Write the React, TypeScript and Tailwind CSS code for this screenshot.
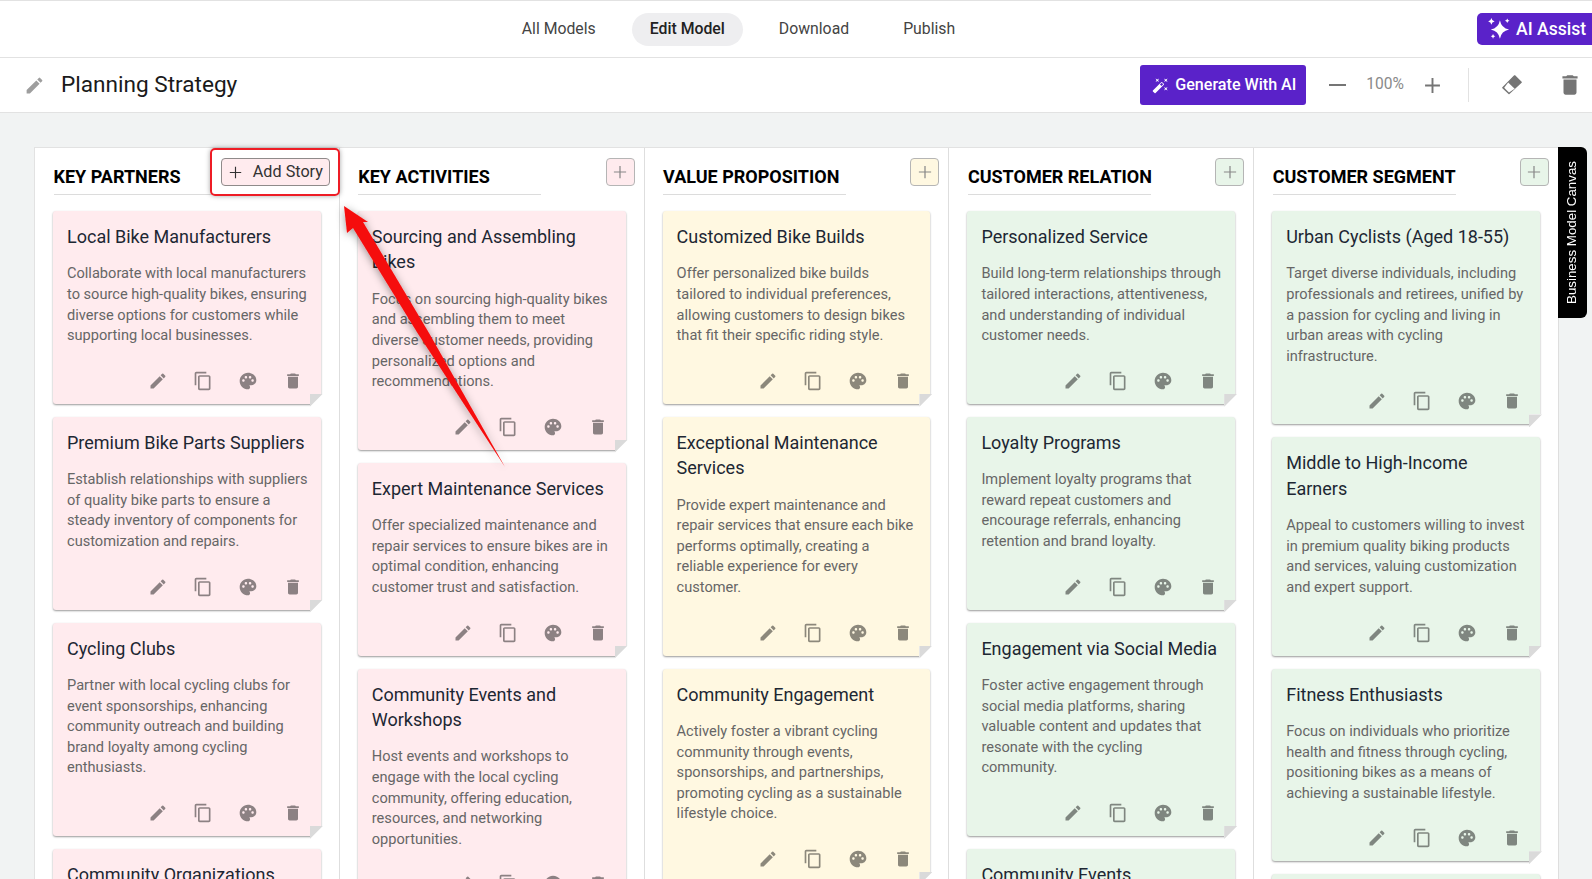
const editPath = 'M3 17.25V21h3.75L17.81 9.94l-3.75-3.75L3 17.25zM20.71 7.04c.39-.39.39-1.02 0-1.41l-2.34-2.34a.9959.9959 0 0 0-1.41 0l-1.83 1.83 3.75 3.75 1.83-1.83z';
const copyPath = 'M16 1H4c-1.1 0-2 .9-2 2v14h2V3h12V1zm3 4H8c-1.1 0-2 .9-2 2v14c0 1.1.9 2 2 2h11c1.1 0 2-.9 2-2V7c0-1.1-.9-2-2-2zm0 16H8V7h11v14z';
const palettePath = 'M12 2C6.49 2 2 6.49 2 12s4.49 10 10 10c1.38 0 2.5-1.12 2.5-2.5 0-.61-.23-1.2-.64-1.67-.08-.1-.13-.21-.13-.33 0-.28.22-.5.5-.5H16c3.31 0 6-2.69 6-6 0-4.96-4.49-9-10-9zm5.5 11c-.83 0-1.5-.67-1.5-1.5s.67-1.5 1.5-1.5 1.5.67 1.5 1.5-.67 1.5-1.5 1.5zm-3-4c-.83 0-1.5-.67-1.5-1.5S13.67 6 14.5 6s1.5.67 1.5 1.5S15.33 9 14.5 9zM5 11.5c0-.83.67-1.5 1.5-1.5s1.5.67 1.5 1.5S7.33 13 6.5 13 5 12.33 5 11.5zm6-4c0 .83-.67 1.5-1.5 1.5S8 8.33 8 7.5 8.67 6 9.5 6s1.5.67 1.5 1.5z';
const deletePath = 'M6 19c0 1.1.9 2 2 2h8c1.1 0 2-.9 2-2V7H6v12zM19 4h-3.5l-1-1h-5l-1 1H5v2h14V4z';
const wandPath = 'M7.5 5.6 10 7 8.6 4.5 10 2 7.5 3.4 5 2l1.4 2.5L5 7zm12 9.8L17 14l1.4 2.5L17 19l2.5-1.4L22 19l-1.4-2.5L22 14zM22 2l-2.5 1.4L17 2l1.4 2.5L17 7l2.5-1.4L22 7l-1.4-2.5zm-7.63 5.29a.9959.9959 0 0 0-1.41 0L1.29 18.96c-.39.39-.39 1.02 0 1.41l2.34 2.34c.39.39 1.02.39 1.41 0L16.7 11.05c.39-.39.39-1.02 0-1.41l-2.33-2.35zm-1.03 5.49-2.12-2.12 2.44-2.44 2.12 2.12-2.44 2.44z';

function Icon({ d, className }: { d: string; className?: string }) {
  return (
    <svg viewBox="0 0 24 24" fill="currentColor" className={className}>
      <path d={d} />
    </svg>
  );
}

function Plus({ className, weight = 1.4 }: { className?: string; weight?: number }) {
  return (
    <svg viewBox="0 0 16 16" fill="none" stroke="currentColor" strokeWidth={weight} className={className}>
      <path d="M8 1v14M1 8h14" />
    </svg>
  );
}

function Sparkles({ className }: { className?: string }) {
  return (
    <svg viewBox="0 0 24 24" fill="currentColor" className={className}>
      <path d="M13 2.5Q14.5 11 23 12.6 14.5 14.2 13 22.7 11.5 14.2 3 12.6 11.5 11 13 2.5z" />
      <path d="M3.7 0Q4.2 3.2 7.2 3.7 4.2 4.2 3.7 7.4 3.2 4.2 0.2 3.7 3.2 3.2 3.7 0z" />
      <path d="M21 .5Q21.4 2.6 23.5 3 21.4 3.4 21 5.5 20.6 3.4 18.5 3 20.6 2.6 21 .5z" />
      <path d="M5.5 17.5Q5.9 19.6 8 20 5.9 20.4 5.5 22.5 5.1 20.4 3 20 5.1 19.6 5.5 17.5z" />
    </svg>
  );
}

function Eraser({ className }: { className?: string }) {
  return (
    <svg viewBox="0 0 24 24" className={className}>
      <path d="M15.2 1 23 8.8 8.4 22.2 1 15.2z" fill="#757575" stroke="#757575" strokeWidth="1.6" strokeLinejoin="round" />
      <path d="M7.4 9 15.2 16.6 8.4 21 2.6 15.2z" fill="#fff" strokeLinejoin="round" />
    </svg>
  );
}

type Tone = 'pink' | 'yellow' | 'green';
type Card = { title: string; body: string };

const columns: { name: string; tone: Tone; cards: Card[] }[] = [
  {
    name: 'KEY PARTNERS',
    tone: 'pink',
    cards: [
      { title: 'Local Bike Manufacturers', body: 'Collaborate with local manufacturers to source high-quality bikes, ensuring diverse options for customers while supporting local businesses.' },
      { title: 'Premium Bike Parts Suppliers', body: 'Establish relationships with suppliers of quality bike parts to ensure a steady inventory of components for customization and repairs.' },
      { title: 'Cycling Clubs', body: 'Partner with local cycling clubs for event sponsorships, enhancing community outreach and building brand loyalty among cycling enthusiasts.' },
      { title: 'Community Organizations', body: '' },
    ],
  },
  {
    name: 'KEY ACTIVITIES',
    tone: 'pink',
    cards: [
      { title: 'Sourcing and Assembling Bikes', body: 'Focus on sourcing high-quality bikes and assembling them to meet diverse customer needs, providing personalized options and recommendations.' },
      { title: 'Expert Maintenance Services', body: 'Offer specialized maintenance and repair services to ensure bikes are in optimal condition, enhancing customer trust and satisfaction.' },
      { title: 'Community Events and Workshops', body: 'Host events and workshops to engage with the local cycling community, offering education, resources, and networking opportunities.' },
    ],
  },
  {
    name: 'VALUE PROPOSITION',
    tone: 'yellow',
    cards: [
      { title: 'Customized Bike Builds', body: 'Offer personalized bike builds tailored to individual preferences, allowing customers to design bikes that fit their specific riding style.' },
      { title: 'Exceptional Maintenance Services', body: 'Provide expert maintenance and repair services that ensure each bike performs optimally, creating a reliable experience for every customer.' },
      { title: 'Community Engagement', body: 'Actively foster a vibrant cycling community through events, sponsorships, and partnerships, promoting cycling as a sustainable lifestyle choice.' },
    ],
  },
  {
    name: 'CUSTOMER RELATION',
    tone: 'green',
    cards: [
      { title: 'Personalized Service', body: 'Build long-term relationships through tailored interactions, attentiveness, and understanding of individual customer needs.' },
      { title: 'Loyalty Programs', body: 'Implement loyalty programs that reward repeat customers and encourage referrals, enhancing retention and brand loyalty.' },
      { title: 'Engagement via Social Media', body: 'Foster active engagement through social media platforms, sharing valuable content and updates that resonate with the cycling\ncommunity.' },
      { title: 'Community Events', body: '' },
    ],
  },
  {
    name: 'CUSTOMER SEGMENT',
    tone: 'green',
    cards: [
      { title: 'Urban Cyclists (Aged 18-55)', body: 'Target diverse individuals, including professionals and retirees, unified by a passion for cycling and living in urban areas with cycling infrastructure.' },
      { title: 'Middle to High-Income Earners', body: 'Appeal to customers willing to invest in premium quality biking products and services, valuing customization and expert support.' },
      { title: 'Fitness Enthusiasts', body: 'Focus on individuals who prioritize health and fitness through cycling, positioning bikes as a means of achieving a sustainable lifestyle.' },
      { title: '', body: '' },
    ],
  },
];

const toneBg = { pink: 'bg-[#ffebee]', yellow: 'bg-[#fff8e1]', green: 'bg-[#e8f5e9]' };

function StoryCard({ card, tone }: { card: Card; tone: Tone }) {
  return (
    <div className={`relative rounded-[3px] px-[14px] pt-[13px] pb-[13px] shadow-[0_1px_2px_rgba(0,0,0,0.4)] ${toneBg[tone]}`}>
      <h3 className="min-h-[25px] text-[18px] leading-[25.4px] text-[#1d2733]">{card.title}</h3>
      <p className="mt-[14px] -mr-[2px] text-[14.6px] leading-[20.6px] whitespace-pre-line text-[#666]">{card.body}</p>
      <div className="mt-[25px] flex justify-end gap-[25px] pr-[3.5px] text-black/45">
        <Icon d={editPath} className="h-5 w-5" />
        <Icon d={copyPath} className="h-5 w-5" />
        <Icon d={palettePath} className="h-5 w-5" />
        <Icon d={deletePath} className="h-5 w-5" />
      </div>
      <div className="absolute -right-[2px] -bottom-[3px] h-[13px] w-[13px] bg-white">
        <div className="h-full w-full bg-[#dadada] [clip-path:polygon(0_0,100%_0,0_100%)]" />
      </div>
    </div>
  );
}

function Column({ name, tone, cards, first }: { name: string; tone: Tone; cards: Card[]; first: boolean }) {
  return (
    <div className="w-[304.8px] shrink-0 border-r border-[#dedede] pr-[18px] pl-[18px]">
      <div className="relative flex h-[46px] items-start">
        <h2 className="ml-[0.5px] h-[47px] w-[183px] border-b border-[#dcdcdc] pt-[16px] text-[18px] leading-[26px] font-bold whitespace-nowrap text-black">
          {name}
        </h2>
        {first ? (
          <button className="absolute top-[10px] -right-[9px] flex h-[28px] w-[109px] items-center gap-[11px] rounded-[4px] border border-[#8f8a8a] bg-[#ffebee] pl-[7px] text-[16.2px] text-[#333]">
            <Plus className="h-[13px] w-[13px] text-[#333]" />
            Add Story
          </button>
        ) : (
          <button
            className={`absolute top-[10px] -right-[9px] flex h-[28px] w-[29px] items-center justify-center rounded-[4px] border border-[#b5b5b5] ${toneBg[tone]}`}
          >
            <Plus className="h-[14px] w-[14px] text-[#888]" />
          </button>
        )}
      </div>
      <div className="mt-[17px] flex flex-col gap-[13px]">
        {cards.map((c, i) => (
          <StoryCard key={i} card={c} tone={tone} />
        ))}
      </div>
    </div>
  );
}

export default function App() {
  return (
    <div className="relative h-[879px] w-[1592px] overflow-hidden bg-[#f1f3f3] font-['Roboto',sans-serif]">
      <header className="flex h-[58px] items-center border-y border-[#e2e2e2] bg-white">
        <nav className="flex flex-1 items-center justify-center gap-[18px] text-[15.8px] text-[#444]">
          <a className="px-[18px] py-[6px]">All Models</a>
          <a className="flex h-[33px] items-center rounded-full bg-[#eeeef0] px-[18px] font-medium text-[#222]">Edit Model</a>
          <a className="px-[18px] py-[6px]">Download</a>
          <a className="px-[18px] py-[6px]">Publish</a>
        </nav>
        <button className="-mr-[5px] flex h-[32px] w-[120px] shrink-0 items-center gap-[6px] self-center rounded-l-[5px] bg-[#5a22c9] pl-[11px] text-[17.6px] font-medium text-white">
          <Sparkles className="h-[22px] w-[22px]" />
          AI Assist
        </button>
      </header>

      <div className="flex h-[55px] items-center border-b border-[#e2e2e2] bg-white">
        <Icon d={editPath} className="ml-[24px] h-[21px] w-[21px] text-[#9e9e9e]" />
        <h1 className="ml-[16px] text-[22.6px] text-[#1a1a1a]">Planning Strategy</h1>
        <button className="ml-auto flex h-[40px] w-[166px] items-center gap-[6px] rounded-[3px] bg-[#5a22c9] pl-[12px] text-[16.1px] font-medium text-white">
          <Icon d={wandPath} className="h-[17px] w-[17px]" />
          Generate With AI
        </button>
        <div className="ml-[23px] h-[2px] w-[17px] bg-[#757575]" />
        <span className="ml-[20px] text-[15.6px] text-[#8a8a8a]">100%</span>
        <Plus weight={1.8} className="ml-[20px] h-[17px] w-[17px] text-[#757575]" />
        <div className="ml-[27px] h-[34px] w-px bg-[#e2e2e2]" />
        <Eraser className="ml-[33px] h-[20px] w-[20px]" />
        <Icon d={deletePath} className="mr-[9px] ml-[35px] h-[26px] w-[26px] text-[#757575]" />
      </div>

      <main className="flex items-start pt-[34px] pl-[34px]">
        <div className="flex border-t border-l border-[#e2e2e2] bg-white">
          {columns.map((col, i) => (
            <Column key={col.name} name={col.name} tone={col.tone} cards={col.cards} first={i === 0} />
          ))}
        </div>
        <div className="-ml-px flex h-[171px] w-[29px] shrink-0 items-center justify-center rounded-r-[6px] bg-black">
          <span className="rotate-180 font-['Liberation_Sans',sans-serif] text-[13.33px] whitespace-nowrap text-white [writing-mode:vertical-rl]">
            Business Model Canvas
          </span>
        </div>
      </main>

      <div className="absolute top-[148px] left-[210px] h-[48px] w-[130px] rounded-[5px] border-2 border-[#ee1c25] shadow-[0_0_5px_rgba(0,0,0,0.35)]" />
      <svg className="absolute top-0 left-0 h-[879px] w-[1592px]" viewBox="0 0 1592 879">
        <defs>
          <filter id="arrow-shadow" x="-30%" y="-20%" width="160%" height="140%">
            <feDropShadow dx="0" dy="2" stdDeviation="4" floodColor="#000" floodOpacity="0.4" />
          </filter>
        </defs>
        <polygon
          points="344,206 368,222 363,222 429,333 505,467 417.5,333 353,228 347,233"
          fill="#f50d0d"
          filter="url(#arrow-shadow)"
        />
      </svg>
    </div>
  );
}
